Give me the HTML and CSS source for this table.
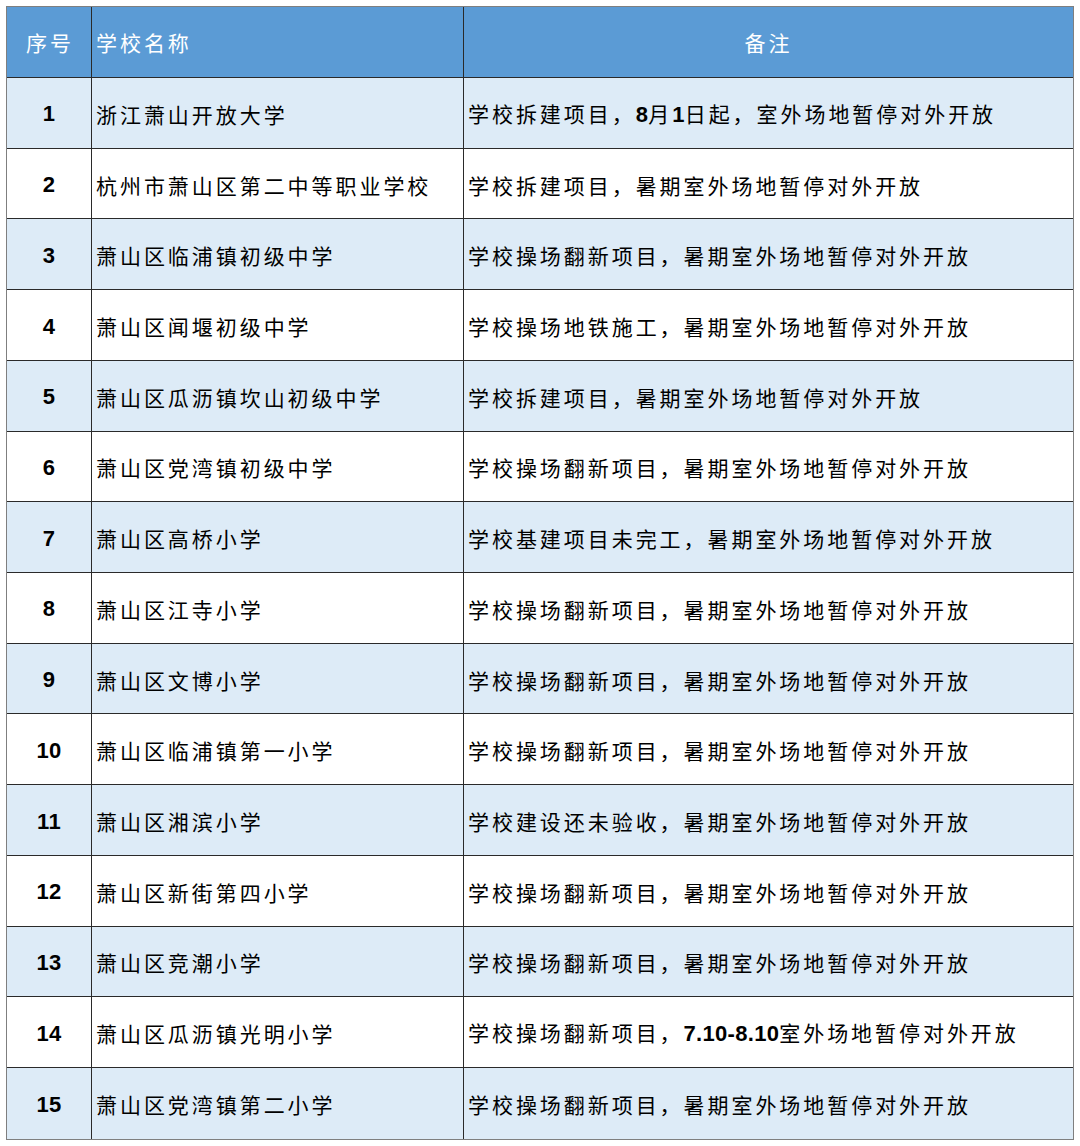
FILE: index.html
```html
<!DOCTYPE html>
<html lang="zh-CN">
<head>
<meta charset="utf-8">
<title>学校名单</title>
<link rel="stylesheet" href="styles.css">
</head>
<body>
<table class="list">
  <thead>
    <tr>
      <th class="c-no">序号</th>
      <th class="c-name">学校名称</th>
      <th class="c-note">备注</th>
    </tr>
  </thead>
  <tbody>
    <tr class="alt"><td class="c-no">1</td><td class="c-name">浙江萧山开放大学</td><td class="c-note">学校拆建项目，<b>8</b>月<b>1</b>日起，室外场地暂停对外开放</td></tr>
    <tr><td class="c-no">2</td><td class="c-name">杭州市萧山区第二中等职业学校</td><td class="c-note">学校拆建项目，暑期室外场地暂停对外开放</td></tr>
    <tr class="alt"><td class="c-no">3</td><td class="c-name">萧山区临浦镇初级中学</td><td class="c-note">学校操场翻新项目，暑期室外场地暂停对外开放</td></tr>
    <tr><td class="c-no">4</td><td class="c-name">萧山区闻堰初级中学</td><td class="c-note">学校操场地铁施工，暑期室外场地暂停对外开放</td></tr>
    <tr class="alt"><td class="c-no">5</td><td class="c-name">萧山区瓜沥镇坎山初级中学</td><td class="c-note">学校拆建项目，暑期室外场地暂停对外开放</td></tr>
    <tr><td class="c-no">6</td><td class="c-name">萧山区党湾镇初级中学</td><td class="c-note">学校操场翻新项目，暑期室外场地暂停对外开放</td></tr>
    <tr class="alt"><td class="c-no">7</td><td class="c-name">萧山区高桥小学</td><td class="c-note">学校基建项目未完工，暑期室外场地暂停对外开放</td></tr>
    <tr><td class="c-no">8</td><td class="c-name">萧山区江寺小学</td><td class="c-note">学校操场翻新项目，暑期室外场地暂停对外开放</td></tr>
    <tr class="alt"><td class="c-no">9</td><td class="c-name">萧山区文博小学</td><td class="c-note">学校操场翻新项目，暑期室外场地暂停对外开放</td></tr>
    <tr><td class="c-no">10</td><td class="c-name">萧山区临浦镇第一小学</td><td class="c-note">学校操场翻新项目，暑期室外场地暂停对外开放</td></tr>
    <tr class="alt"><td class="c-no">11</td><td class="c-name">萧山区湘滨小学</td><td class="c-note">学校建设还未验收，暑期室外场地暂停对外开放</td></tr>
    <tr><td class="c-no">12</td><td class="c-name">萧山区新街第四小学</td><td class="c-note">学校操场翻新项目，暑期室外场地暂停对外开放</td></tr>
    <tr class="alt"><td class="c-no">13</td><td class="c-name">萧山区竞潮小学</td><td class="c-note">学校操场翻新项目，暑期室外场地暂停对外开放</td></tr>
    <tr><td class="c-no">14</td><td class="c-name">萧山区瓜沥镇光明小学</td><td class="c-note">学校操场翻新项目，<b>7.10-8.10</b>室外场地暂停对外开放</td></tr>
    <tr class="alt"><td class="c-no">15</td><td class="c-name">萧山区党湾镇第二小学</td><td class="c-note">学校操场翻新项目，暑期室外场地暂停对外开放</td></tr>
  </tbody>
</table>
</body>
</html>
```

FILE: styles.css
```css
html, body {
  margin: 0;
  padding: 0;
  background: #ffffff;
}

body {
  padding: 6px 0 0 6px;
  font-family: "Noto Sans CJK SC", "Liberation Sans", sans-serif;
}

.list {
  table-layout: fixed;
  border-collapse: separate;
  border-spacing: 0;
  width: 1068px;
  border: 1px solid #7f7f7f;
  color: #000000;
}

.list th,
.list td {
  box-sizing: border-box;
  border-right: 1px solid #2a2a2a;
  border-bottom: 1px solid #2a2a2a;
  padding: 0 4px;
  font-size: 21px;
  font-weight: 400;
  letter-spacing: 2.95px;
  line-height: 1;
  vertical-align: middle;
  white-space: nowrap;
  text-align: left;
}

.list th:last-child,
.list td:last-child {
  border-right: none;
}

.list tbody tr:last-child td {
  border-bottom: none;
}

.list thead th {
  height: 71px;
  background: #5b9bd5;
  color: #ffffff;
}

.list tbody td {
  height: 70.73px;
  padding-top: 3px;
}

.list tbody tr.alt td {
  background: #ddebf7;
}

.list .c-no {
  width: 85px;
  text-align: center;
  padding: 0;
}

.list th.c-no {
  padding-left: 2px;
}

.list .c-name {
  width: 372px;
}

.list th.c-note {
  text-align: center;
}

.list td.c-no {
  font-family: "Liberation Sans", Arial, sans-serif;
  font-weight: 700;
  font-size: 22px;
  letter-spacing: 0.3px;
  padding-top: 3px;
}

.list td.c-note b {
  font-family: "Liberation Sans", Arial, sans-serif;
  font-weight: 700;
  font-size: 22px;
  letter-spacing: 0.3px;
}
```
